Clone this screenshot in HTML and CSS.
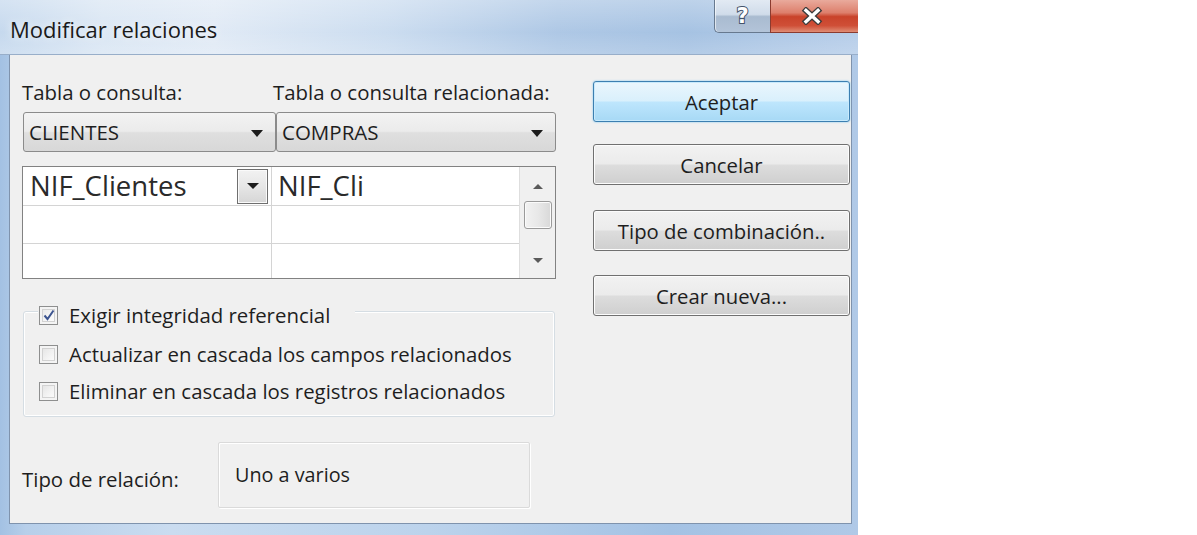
FILE: index.html
```html
<!DOCTYPE html>
<html lang="es">
<head>
<meta charset="utf-8">
<title>Modificar relaciones</title>
<link rel="stylesheet" href="styles.css">
</head>
<body>
<div class="window">
  <div class="titlebar">
    <span class="title">Modificar relaciones</span>
    <div class="caption-buttons">
      <div class="cap-help"><span class="help-glyph">?</span></div>
      <div class="cap-close">
        <svg width="22" height="18" viewBox="0 0 22 18">
          <path d="M5 3.5 L17 14.5 M17 3.5 L5 14.5" stroke="#3b3b3b" stroke-width="6" stroke-linecap="square" fill="none"/>
          <path d="M5 3.5 L17 14.5 M17 3.5 L5 14.5" stroke="#ffffff" stroke-width="3.4" stroke-linecap="square" fill="none"/>
        </svg>
      </div>
    </div>
  </div>
  <div class="client">
    <div class="left">
      <div class="labels">
        <span class="lbl lbl-first">Tabla o consulta:</span>
        <span class="lbl">Tabla o consulta relacionada:</span>
      </div>
      <div class="combos">
        <div class="combo combo-first"><span class="combo-text">CLIENTES</span><span class="combo-arrow"></span></div>
        <div class="combo combo-second"><span class="combo-text">COMPRAS</span><span class="combo-arrow"></span></div>
      </div>
      <div class="grid">
        <div class="grid-body">
          <div class="row row-1">
            <div class="cell cell-a"><span class="cell-text">NIF_Clientes</span><span class="cell-drop"><span class="drop-arrow"></span></span></div>
            <div class="cell cell-b"><span class="cell-text">NIF_Cli</span></div>
          </div>
          <div class="row row-2">
            <div class="cell cell-a"></div>
            <div class="cell cell-b"></div>
          </div>
          <div class="row row-3">
            <div class="cell cell-a"></div>
            <div class="cell cell-b"></div>
          </div>
        </div>
        <div class="scrollbar">
          <span class="sb-up"></span>
          <span class="sb-thumb"></span>
          <span class="sb-down"></span>
        </div>
      </div>
      <div class="group">
        <div class="chk-row chk-title">
          <span class="chk checked">
            <svg width="12" height="12" viewBox="0 0 12 12"><path d="M1.5 6.5 L4.5 10 L10.5 1.5" stroke="#3d5590" stroke-width="2" fill="none" stroke-linejoin="miter"/></svg>
          </span>
          <span class="chk-label">Exigir integridad referencial</span>
        </div>
        <div class="chk-row chk-second">
          <span class="chk"></span>
          <span class="chk-label">Actualizar en cascada los campos relacionados</span>
        </div>
        <div class="chk-row chk-third">
          <span class="chk"></span>
          <span class="chk-label">Eliminar en cascada los registros relacionados</span>
        </div>
      </div>
      <div class="tipo">
        <span class="lbl tipo-label">Tipo de relación:</span>
        <div class="tipo-box"><span class="tipo-text">Uno a varios</span></div>
      </div>
    </div>
    <div class="right">
      <div class="btn btn-default btn-aceptar">Aceptar</div>
      <div class="btn btn-cancelar">Cancelar</div>
      <div class="btn btn-tipo">Tipo de combinación..</div>
      <div class="btn btn-crear">Crear nueva...</div>
    </div>
  </div>
</div>
</body>
</html>
```
FILE: styles.css
```css
* { box-sizing: border-box; }
html, body { margin: 0; padding: 0; background: #ffffff; }
body {
  font-family: "Open Sans", "Noto Sans", "DejaVu Sans", sans-serif;
  color: #1e1e1e;
  width: 1197px;
  height: 535px;
  overflow: hidden;
}
.window {
  width: 858px;
  height: 535px;
  display: flex;
  flex-direction: column;
  background: linear-gradient(to right, #a3c1e3 0%, #b7cfea 3%, #cadcf0 20%, #bcd3ec 50%, #a4c2e4 78%, #b0c9e7 100%);
}
.titlebar {
  height: 55px;
  display: flex;
  align-items: flex-start;
  background:
    linear-gradient(to bottom, rgba(255,255,255,0.3), rgba(255,255,255,0.05) 60%, rgba(255,255,255,0.2)),
    linear-gradient(to right, #c3d7ed 0%, #d8e5f3 12%, #dfe9f5 25%, #c9dbef 45%, #aac5e4 65%, #a1bfe1 80%, #b3cbe8 100%);
  border-bottom: 1px solid #98aec9;
}
.title {
  margin: 16px 0 0 10px;
  font-size: 22px;
  line-height: 26px;
  color: #1a1a1a;
  text-shadow: 0 0 8px rgba(255,255,255,0.9);
}
.caption-buttons {
  margin-left: auto;
  display: flex;
  height: 33px;
}
.cap-help {
  width: 56px;
  height: 33px;
  border: 1px solid #67798f;
  border-top: none;
  border-right: none;
  border-bottom-left-radius: 5px;
  background: linear-gradient(to bottom, #e2eaf3 0%, #d0dcea 45%, #a9bbd0 52%, #b3c4d9 100%);
  box-shadow: inset 1px 0 0 rgba(255,255,255,0.6);
  display: flex;
  align-items: center;
  justify-content: center;
}
.help-glyph {
  font-family: "DejaVu Sans", sans-serif;
  font-weight: bold;
  font-size: 21px;
  line-height: 1;
  color: #ffffff;
  -webkit-text-stroke: 2px #44536a;
  paint-order: stroke fill;
}
.cap-close {
  width: 88px;
  height: 33px;
  border-left: 1px solid #8b3b2f;
  border-bottom: 1px solid #8b3b2f;
  background: linear-gradient(to bottom, #e9aa9c 0%, #dd7f6c 40%, #c9432b 52%, #cf4f37 80%, #e08d75 100%);
  display: flex;
  align-items: center;
  justify-content: center;
  padding-right: 6px;
}
.client {
  margin: 0 6px 0 9px;
  height: 469px;
  background: #f0f0f0;
  border-left: 1px solid #7f93ad;
  border-right: 1px solid #7f93ad;
  border-bottom: 1px solid #7f93ad;
  display: flex;
  align-items: flex-start;
  padding: 25px 0 0 12px;
}
.left {
  width: 534px;
  display: flex;
  flex-direction: column;
}
.lbl {
  font-size: 20.4px;
  line-height: 24px;
  color: #1e1e1e;
  white-space: nowrap;
}
.labels {
  display: flex;
  height: 24px;
}
.lbl-first { width: 251px; }
.combos {
  margin-top: 8px;
  display: flex;
  height: 40px;
}
.combo {
  height: 40px;
  border: 1px solid #8b8b8b;
  border-radius: 3px;
  background: linear-gradient(to bottom, #f3f3f3 0%, #ebebeb 48%, #dfdfdf 52%, #d8d8d8 100%);
  display: flex;
  align-items: center;
  padding: 0 12px 0 5px;
}
.combo-first { width: 253px; margin-left: 1px; }
.combo-second { width: 280px; }
.combo-text {
  font-size: 20.5px;
  line-height: 24px;
  color: #1e1e1e;
}
.combo-arrow {
  margin-left: auto;
  width: 0;
  height: 0;
  border-left: 6px solid transparent;
  border-right: 6px solid transparent;
  border-top: 7px solid #1b1b1b;
  margin-top: 2px;
}
.grid {
  margin-top: 14px;
  height: 113px;
  border: 1px solid #828282;
  background: #ffffff;
  display: flex;
}
.grid-body {
  width: 496px;
  display: flex;
  flex-direction: column;
}
.row { display: flex; border-bottom: 1px solid #d4d4d4; }
.row-1 { height: 39px; }
.row-2 { height: 38px; }
.row-3 { height: 34px; border-bottom: none; }
.cell { height: 100%; display: flex; align-items: center; }
.cell-a { width: 249px; border-right: 1px solid #d4d4d4; padding: 0 3px 0 7px; }
.cell-b { flex: 1; padding-left: 6px; }
.cell-text {
  font-size: 27.5px;
  line-height: 32px;
  color: #2a2a2a;
}
.cell-drop {
  margin-left: auto;
  width: 31px;
  height: 35px;
  border: 1px solid #6f6f6f;
  background: linear-gradient(to bottom, #f2f2f2 0%, #e6e6e6 50%, #d6d6d6 100%);
  box-shadow: inset 0 0 0 1px #fafafa;
  display: flex;
  align-items: center;
  justify-content: center;
}
.drop-arrow {
  width: 0;
  height: 0;
  border-left: 6px solid transparent;
  border-right: 6px solid transparent;
  border-top: 6px solid #1b1b1b;
}
.scrollbar {
  width: 36px;
  border-left: 1px solid #dedede;
  background: #f0f0f0;
  display: flex;
  flex-direction: column;
  align-items: center;
}
.sb-up, .sb-down {
  width: 0;
  height: 0;
  border-left: 5px solid transparent;
  border-right: 5px solid transparent;
}
.sb-up { margin-top: 17px; border-bottom: 5px solid #5a5a5a; }
.sb-down { margin-top: auto; margin-bottom: 15px; border-top: 5px solid #5a5a5a; }
.sb-thumb {
  margin-top: 12px;
  width: 28px;
  height: 28px;
  border: 1px solid #9a9a9a;
  border-radius: 3px;
  background: linear-gradient(to right, #f2f2f2 0%, #e8e8e8 50%, #d8d8d8 100%);
  box-shadow: inset 0 0 0 1px #fbfbfb;
}
.group {
  margin-top: 32px;
  margin-left: 1px;
  width: 532px;
  height: 106px;
  border: 1px solid #d5dde3;
  border-radius: 3px;
  box-shadow: inset 0 0 0 1px #ffffff;
  display: flex;
  flex-direction: column;
}
.chk-row {
  display: flex;
  align-items: center;
  height: 24px;
  padding-left: 15px;
}
.chk-title {
  margin-top: -9px;
  margin-left: 14px;
  width: 317px;
  padding-left: 1px;
  background: #f0f0f0;
}
.chk-second { margin-top: 15px; }
.chk-third { margin-top: 13px; }
.chk {
  width: 19px;
  height: 19px;
  flex: none;
  border: 1px solid #8e8f8f;
  background: linear-gradient(135deg, #e0e0e0 0%, #f4f4f4 60%, #ffffff 100%);
  box-shadow: inset 0 0 0 2px #f4f4f4, inset 0 0 0 3px #d2d2d2;
  display: flex;
  align-items: center;
  justify-content: center;
}
.chk.checked { background: linear-gradient(135deg, #e4e4e4 0%, #f7f7f7 60%, #ffffff 100%); }
.chk-label {
  margin-left: 11px;
  font-size: 20.4px;
  line-height: 24px;
  white-space: nowrap;
  color: #1e1e1e;
}
.tipo {
  margin-top: 25px;
  display: flex;
  align-items: center;
}
.tipo-label { width: 196px; margin-top: 8px; }
.tipo-box {
  width: 312px;
  height: 66px;
  border: 1px solid #dadada;
  border-radius: 2px;
  box-shadow: 1px 1px 0 #ffffff, inset 1px 1px 0 #ffffff;
  padding: 20px 0 0 16px;
}
.tipo-text {
  font-size: 19.8px;
  line-height: 24px;
  color: #1e1e1e;
}
.right {
  margin-top: 1px;
  margin-left: 37px;
  width: 257px;
  display: flex;
  flex-direction: column;
}
.btn {
  height: 41px;
  border: 1px solid #707070;
  border-radius: 3px;
  background: linear-gradient(to bottom, #f2f2f2 0%, #ebebeb 49%, #dddddd 51%, #cfcfcf 100%);
  box-shadow: inset 0 0 0 1px #fcfcfc;
  display: flex;
  align-items: center;
  justify-content: center;
  font-size: 20.3px;
  line-height: 24px;
  color: #1e1e1e;
}
.btn-default {
  border-color: #3c7fb1;
  background: linear-gradient(to bottom, #eaf6fd 0%, #d9f0fc 49%, #bee6fd 51%, #a7d9f5 100%);
  box-shadow: inset 0 0 0 1px #c8eafc, 0 0 2px #6fc3f0;
}
.btn-cancelar { margin-top: 22px; }
.btn-tipo { margin-top: 25px; }
.btn-crear { margin-top: 24px; }
```
